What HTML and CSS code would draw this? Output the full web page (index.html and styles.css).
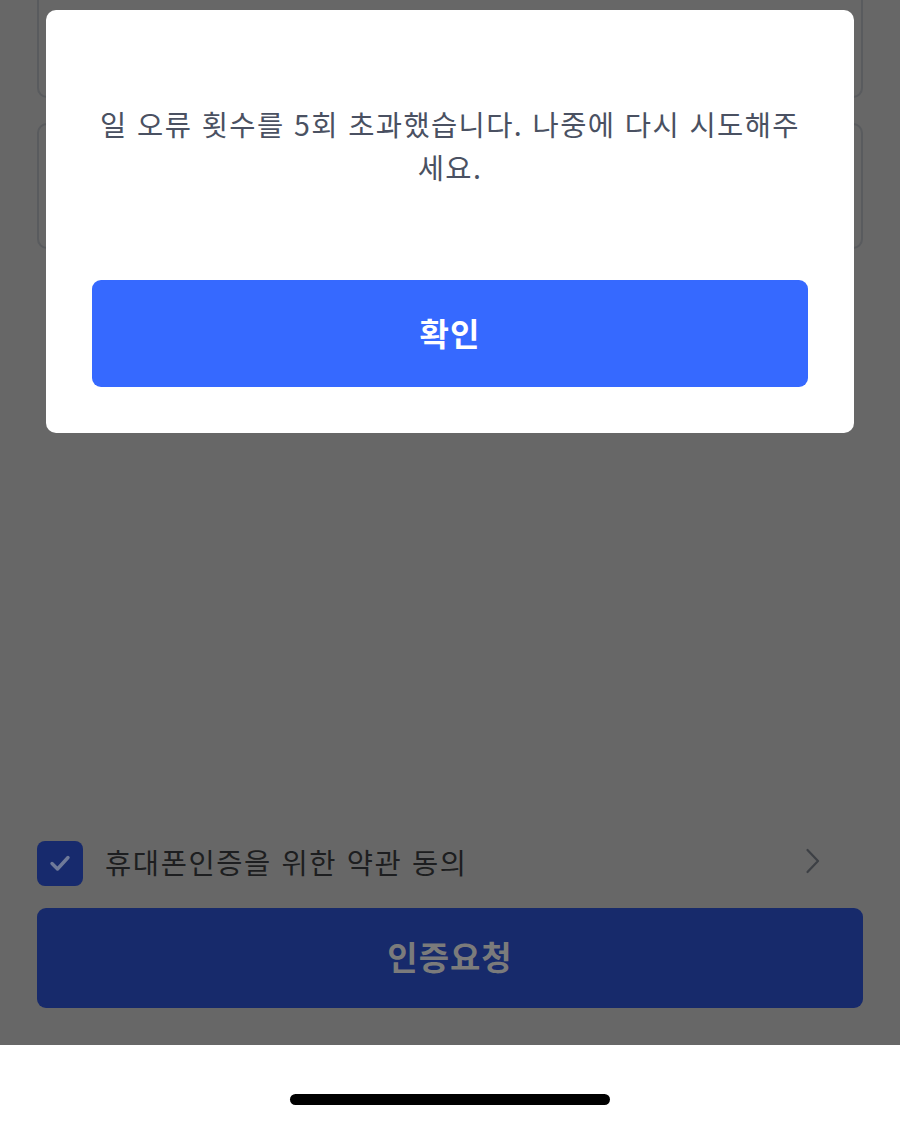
FILE: index.html
```html
<!DOCTYPE html>
<html lang="ko">
<head>
<meta charset="utf-8">
<title>인증</title>
<link rel="stylesheet" href="styles.css">
</head>
<body>
<div class="screen">
  <main class="page">
    <div class="fields">
      <div class="field"></div>
      <div class="field"></div>
    </div>
    <div class="spacer"></div>
    <div class="agree">
      <span class="check">
        <svg width="22" height="18" viewBox="0 0 22 18"><path d="M3 9.5 L8.5 15 L19 3.5" fill="none" stroke="#6f7a99" stroke-width="3.4" stroke-linecap="round" stroke-linejoin="round"/></svg>
      </span>
      <span class="agree-text">휴대폰인증을 위한 약관 동의</span>
      <svg class="chev" width="16" height="26" viewBox="0 0 16 26"><path d="M2.5 2 L13 13 L2.5 24" fill="none" stroke="#3d4045" stroke-width="2.2" stroke-linecap="round" stroke-linejoin="round"/></svg>
    </div>
    <button class="request">인증요청</button>
  </main>
  <footer class="home-bar"><span class="indicator"></span></footer>

  <div class="modal">
    <p class="message">일 오류 횟수를 5회 초과했습니다. 나중에 다시 시도해주세요.</p>
    <button class="confirm">확인</button>
  </div>
</div>
</body>
</html>
```

FILE: styles.css
```css
* { box-sizing: border-box; }
html, body { margin: 0; padding: 0; }
body {
  font-family: "Noto Sans CJK KR", "Noto Sans", sans-serif;
  background: #ffffff;
}
.screen {
  position: relative;
  width: 900px;
  height: 1124px;
  overflow: hidden;
  display: flex;
  flex-direction: column;
}
.page {
  height: 1045px;
  background: #676767;
  padding: 0 37px 37px 37px;
  display: flex;
  flex-direction: column;
}
.fields {
  display: flex;
  flex-direction: column;
  gap: 25px;
  margin-top: -28px;
}
.field {
  height: 126px;
  border: 2px solid #595b5e;
  border-radius: 10px;
}
.spacer { flex: 1; }
.agree {
  display: flex;
  align-items: center;
  height: 46px;
  margin-bottom: 22px;
}
.check {
  width: 46px;
  height: 45px;
  border-radius: 8px;
  background: #172a6d;
  display: flex;
  align-items: center;
  justify-content: center;
}
.agree-text {
  margin-left: 22px;
  font-size: 28.5px;
  letter-spacing: 1.6px;
  color: #1d1e20;
  flex: 1;
  line-height: 1;
  padding-bottom: 2px;
}
.chev { margin-right: 42px; margin-top: -4px; }
.request {
  height: 100px;
  border: none;
  border-radius: 9px;
  background: #172a6b;
  color: #7b7b7b;
  font-family: inherit;
  font-size: 33px;
  letter-spacing: 1px;
  font-weight: 700;
  padding: 0 0 4px 0;
}
.home-bar {
  flex: 1;
  background: #ffffff;
  display: flex;
  justify-content: center;
  padding-top: 49px;
}
.indicator {
  width: 320px;
  height: 11px;
  border-radius: 6px;
  background: #000000;
}
.modal {
  position: absolute;
  left: 46px;
  top: 10px;
  width: 808px;
  height: 423px;
  background: #ffffff;
  border-radius: 10px;
  padding: 0 46px 46px 46px;
  display: flex;
  flex-direction: column;
}
.message {
  flex: 1;
  margin: 0;
  display: flex;
  align-items: center;
  justify-content: center;
  text-align: center;
  font-size: 28.5px;
  line-height: 43px;
  color: #4a5162;
  padding: 0 8px 0 8px;
  letter-spacing: 1.4px;
}
.confirm {
  height: 107px;
  border: none;
  border-radius: 9px;
  background: #3669ff;
  color: #ffffff;
  font-family: inherit;
  font-size: 32px;
  letter-spacing: 1px;
  font-weight: 700;
  padding: 0 0 4px 0;
}
```
